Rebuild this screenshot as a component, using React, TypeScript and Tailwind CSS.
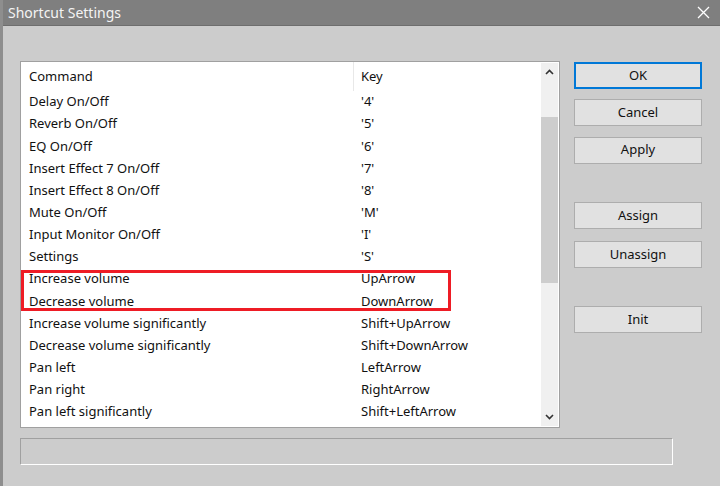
import React from "react";

const rows: [string, string][] = [
  ["Delay On/Off", "'4'"],
  ["Reverb On/Off", "'5'"],
  ["EQ On/Off", "'6'"],
  ["Insert Effect 7 On/Off", "'7'"],
  ["Insert Effect 8 On/Off", "'8'"],
  ["Mute On/Off", "'M'"],
  ["Input Monitor On/Off", "'I'"],
  ["Settings", "'S'"],
  ["Increase volume", "UpArrow"],
  ["Decrease volume", "DownArrow"],
  ["Increase volume significantly", "Shift+UpArrow"],
  ["Decrease volume significantly", "Shift+DownArrow"],
  ["Pan left", "LeftArrow"],
  ["Pan right", "RightArrow"],
  ["Pan left significantly", "Shift+LeftArrow"],
];

function DlgButton({ label, primary }: { label: string; primary?: boolean }) {
  return (
    <button
      className={`h-[27px] w-[128px] bg-[#e1e1e1] text-[13px] text-[#111] ${
        primary ? "border-2 border-[#0078d7]" : "border border-[#adadad]"
      }`}
    >
      {label}
    </button>
  );
}

function ScrollBar() {
  return (
    <div className="flex w-[17px] flex-col bg-[#f0f0f0]">
      <div className="flex h-[18px] items-center justify-center">
        <svg width="9" height="6" viewBox="0 0 9 6">
          <path d="M1 5 L4.5 1.5 L8 5" fill="none" stroke="#333" strokeWidth="1.6" />
        </svg>
      </div>
      <div className="h-[36px]" />
      <div className="h-[166px] bg-[#cdcdcd]" />
      <div className="flex-1" />
      <div className="flex h-[18px] items-center justify-center">
        <svg width="9" height="6" viewBox="0 0 9 6">
          <path d="M1 1 L4.5 4.5 L8 1" fill="none" stroke="#333" strokeWidth="1.6" />
        </svg>
      </div>
    </div>
  );
}

export default function App() {
  return (
    <div
      className="flex h-[486px] w-[720px] overflow-hidden bg-[#cccccc]"
      style={{ fontFamily: '"Noto Sans", "Liberation Sans", sans-serif' }}
    >
      <div className="w-[3px] shrink-0 bg-[#8e8e8e]" />
      <div className="flex flex-1 flex-col">
        <header className="flex h-[26px] items-center justify-between border-b border-[#6e6e6e] bg-[#7f7f7f] pl-[5px] pr-[10px]">
          <h1 className="text-[14px] text-[#f4f4f4]">Shortcut Settings</h1>
          <svg width="13" height="13" viewBox="0 0 13 13">
            <path d="M1 1 L12 12 M12 1 L1 12" stroke="#fff" strokeWidth="1.3" />
          </svg>
        </header>

        <div className="flex pl-[17px] pt-[35px]">
          <div className="relative flex h-[367px] w-[540px] border border-[#a0a0a0] bg-white text-[13px] text-[#111]">
            <div className="flex flex-1 flex-col">
              <div className="flex h-[29px] items-center">
                <div className="w-[332px] pl-[8px]">Command</div>
                <div className="h-full w-px bg-[#e8e8e8]" />
                <div className="pl-[7px]">Key</div>
              </div>
              {rows.map(([cmd, key]) => (
                <div key={cmd} className="flex h-[22.15px] items-center">
                  <div className="w-[332px] pl-[8px]">{cmd}</div>
                  <div className="w-px" />
                  <div className="pl-[7px]">{key}</div>
                </div>
              ))}
            </div>
            <div className="flex py-px pr-px">
              <ScrollBar />
            </div>
            <div className="absolute left-0 top-[208px] h-[41px] w-[430px] border-[3px] border-[#ee1c25]" />
          </div>

          <div className="ml-[14px] mt-[1px] flex flex-col">
            <DlgButton label="OK" primary />
            <div className="mt-[10px]">
              <DlgButton label="Cancel" />
            </div>
            <div className="mt-[10px]">
              <DlgButton label="Apply" />
            </div>
            <div className="mt-[38px]">
              <DlgButton label="Assign" />
            </div>
            <div className="mt-[12px]">
              <DlgButton label="Unassign" />
            </div>
            <div className="mt-[38px]">
              <DlgButton label="Init" />
            </div>
          </div>
        </div>

        <div className="ml-[17px] mt-[10px] h-[27px] w-[653px] border border-b-white border-l-[#a0a0a0] border-r-white border-t-[#a0a0a0]" />
      </div>
    </div>
  );
}
